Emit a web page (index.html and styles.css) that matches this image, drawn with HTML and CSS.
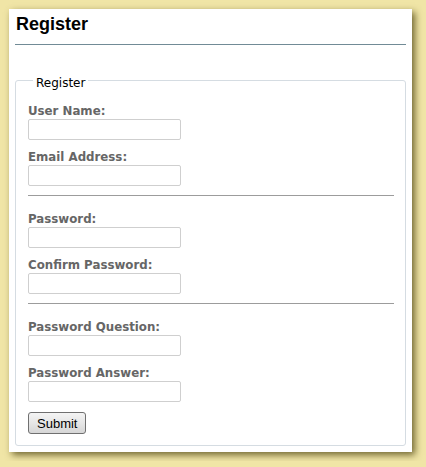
FILE: index.html
```html
<!DOCTYPE html>
<html>
<head>
<meta charset="utf-8">
<link rel="stylesheet" href="styles.css">
</head>
<body>
<div class="page">
  <div class="panel">
    <h1 class="title">Register</h1>
    <fieldset class="box">
      <legend class="legend">Register</legend>
      <div class="field">
        <label class="label">User Name:</label>
        <input class="input" type="text">
      </div>
      <div class="field">
        <label class="label">Email Address:</label>
        <input class="input" type="text">
      </div>
      <hr class="sep">
      <div class="field">
        <label class="label">Password:</label>
        <input class="input" type="password">
      </div>
      <div class="field">
        <label class="label">Confirm Password:</label>
        <input class="input" type="password">
      </div>
      <hr class="sep">
      <div class="field">
        <label class="label">Password Question:</label>
        <input class="input" type="text">
      </div>
      <div class="field">
        <label class="label">Password Answer:</label>
        <input class="input" type="text">
      </div>
      <button class="submit" type="button">Submit</button>
    </fieldset>
  </div>
</div>
</body>
</html>
```

FILE: styles.css
```css
html, body {
  margin: 0;
  padding: 0;
  background: #f0e5a6;
}
.page {
  padding: 9px;
}
.panel {
  width: 403px;
  box-sizing: border-box;
  background: #ffffff;
  padding: 4px 6px 6px 6px;
  box-shadow: 3px 3px 7px rgba(70, 60, 10, 0.75);
}
.title {
  margin: 0;
  padding: 0 1px 9px 1px;
  font-family: "Liberation Sans", Arial, sans-serif;
  font-weight: bold;
  font-size: 18px;
  line-height: 22px;
  color: #000;
  border-bottom: 1px solid #718b96;
}
.box {
  margin: 25px 0 0 0;
  padding: 14px 11px 11px 12px;
  border: 1px solid #d5dce2;
  border-radius: 3px;
}
.legend {
  margin-left: 5px;
  padding: 6px 3px 0 3px;
  font-family: "DejaVu Sans", Verdana, sans-serif;
  font-size: 12px;
  color: #000;
}
.field {
  margin-bottom: 10px;
}
.label {
  display: block;
  font-family: "DejaVu Sans", Verdana, sans-serif;
  font-weight: bold;
  font-size: 11.8px;
  line-height: 15px;
  color: #666666;
}
.input {
  display: block;
  box-sizing: border-box;
  width: 153px;
  height: 21px;
  margin: 0;
  padding: 0 2px;
  border: 1px solid #cfcfcf;
  border-radius: 2px;
  background: #fff;
}
.sep {
  margin: -1px 0 16px 0;
  height: 0;
  border: 0;
  border-top: 1px solid #9c9c9c;
}
.submit {
  display: block;
  margin: 1px 0 0 0;
  height: 22px;
  padding: 0 8px;
  font-family: "Liberation Sans", Arial, sans-serif;
  font-size: 13px;
  color: #000;
  border: 1px solid #707070;
  border-radius: 3px;
  background: linear-gradient(#f4f4f4, #e6e6e6 50%, #d6d6d6);
}
```
